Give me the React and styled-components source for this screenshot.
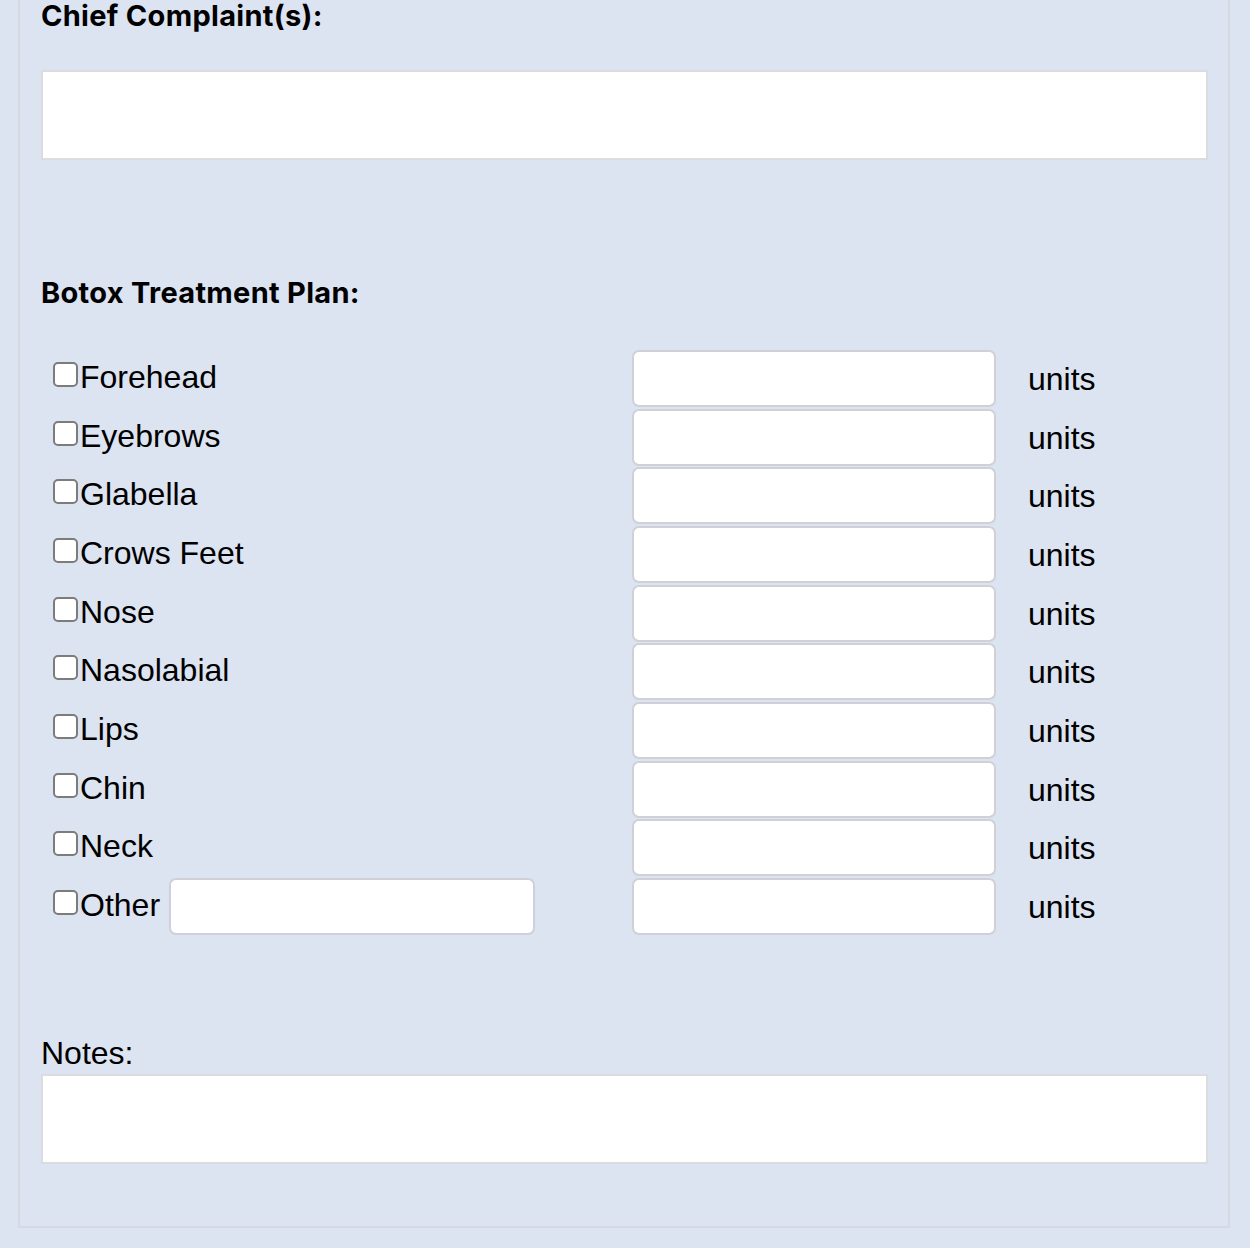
import React from 'react';
import styled, { createGlobalStyle } from 'styled-components';

const GlobalStyle = createGlobalStyle`
  html, body {
    margin: 0;
    padding: 0;
    background: #dce3f1;
  }
  body {
    font-family: "Liberation Sans", Arial, sans-serif;
    color: #000;
  }
`;

const Page = styled.div`
  width: 1250px;
  height: 1248px;
  overflow: hidden;
  background: #dce3f1;
`;

const Panel = styled.div`
  margin-left: 18px;
  width: 1212px;
  box-sizing: border-box;
  border: 2px solid #d5dae2;
  border-top: none;
  padding: 0 20px 62px 21px;
`;

const Heading = styled.h2`
  margin: ${p => p.$top || 0}px 0 0;
  padding-top: 2px;
  font-family: "Inter", "Lato", sans-serif;
  font-weight: 700;
  font-size: 29px;
  line-height: 28px;
  letter-spacing: 0.3px;
`;

const TextBox = styled.textarea`
  display: block;
  box-sizing: border-box;
  width: 100%;
  height: 90px;
  margin-top: ${p => p.$top || 0}px;
  border: 2px solid #dadcdf;
  background: #fff;
  resize: none;
  outline: none;
`;

const PlanGrid = styled.div`
  margin-top: 43px;
  display: grid;
  grid-template-columns: 591px 364px auto;
  grid-auto-rows: 57px;
  row-gap: 1.67px;
  align-items: start;
`;

const LabelCell = styled.label`
  display: flex;
  align-items: flex-start;
  padding: 9px 0 0 12px;
  font-size: 32px;
  line-height: 37px;
`;

const Check = styled.input.attrs({ type: 'checkbox' })`
  appearance: none;
  -webkit-appearance: none;
  flex: none;
  width: 25px;
  height: 25px;
  margin: 3px 2px 0 0;
  box-sizing: border-box;
  border: 2px solid #7c7c7c;
  border-radius: 5px;
  background: #fff;
`;

const Field = styled.input.attrs({ type: 'text' })`
  box-sizing: border-box;
  width: ${p => p.$width || 364}px;
  height: 57px;
  margin: ${p => (p.$inline ? '-9px 0 0 9px' : '0')};
  border: 2px solid #cfd1d6;
  border-radius: 7px;
  background: #fff;
  outline: none;
`;

const Units = styled.span`
  padding: 11px 0 0 32px;
  font-size: 32px;
  line-height: 37px;
`;

const NotesLabel = styled.div`
  margin-top: 100px;
  font-size: 32px;
  line-height: 37px;
`;

const areas = [
  'Forehead',
  'Eyebrows',
  'Glabella',
  'Crows Feet',
  'Nose',
  'Nasolabial',
  'Lips',
  'Chin',
  'Neck',
];

function PlanRow({ name, other }) {
  return (
    <>
      <LabelCell>
        <Check />
        {name}
        {other && <Field $inline $width={366} />}
      </LabelCell>
      <Field />
      <Units>units</Units>
    </>
  );
}

export default function App() {
  return (
    <Page>
      <GlobalStyle />
      <Panel>
        <Heading>Chief Complaint(s):</Heading>
        <TextBox $top={40} />

        <Heading $top={117}>Botox Treatment Plan:</Heading>
        <PlanGrid>
          {areas.map(a => (
            <PlanRow key={a} name={a} />
          ))}
          <PlanRow name="Other" other />
        </PlanGrid>

        <NotesLabel>Notes:</NotesLabel>
        <TextBox $top={2} />
      </Panel>
    </Page>
  );
}
